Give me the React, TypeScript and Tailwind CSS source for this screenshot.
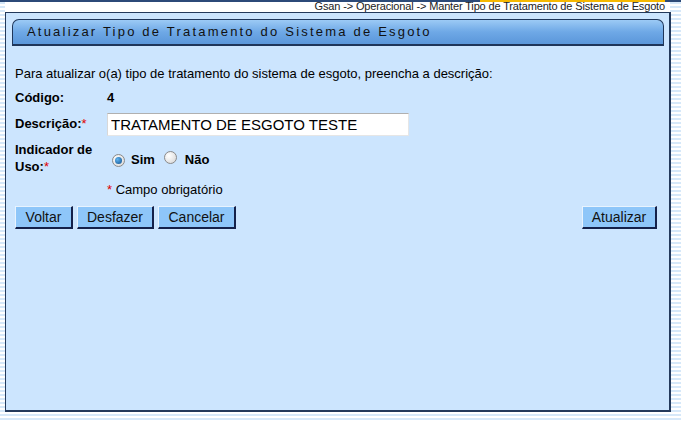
import React, { useState } from 'react';

const font = { fontFamily: '"Liberation Sans", Arial, sans-serif' };

const Radio: React.FC<{ checked: boolean; onClick: () => void }> = ({ checked, onClick }) => (
  <span
    onClick={onClick}
    className="inline-flex items-center justify-center w-[13px] h-[13px] rounded-full border border-[#8a8a8a] bg-[radial-gradient(circle_at_35%_35%,#ffffff,#d4d4d4)] cursor-pointer"
  >
    {checked && (
      <span className="block w-[7px] h-[7px] rounded-full bg-[radial-gradient(circle_at_35%_35%,#5fb4f0,#0f4e8c)]" />
    )}
  </span>
);

const Botao: React.FC<{ label: string; className?: string }> = ({ label, className = '' }) => (
  <button
    className={`h-[23px] px-[8px] bg-[#8ec6f9] text-[14px] text-[#111] leading-none border-t border-l border-t-[#e8f3fe] border-l-[#e8f3fe] border-b-2 border-r-2 border-b-[#14214a] border-r-[#14214a] ${className}`}
  >
    {label}
  </button>
);

export default function App() {
  const [ativo, setAtivo] = useState(true);
  const [descricao, setDescricao] = useState('TRATAMENTO DE ESGOTO TESTE');

  return (
    <div
      style={font}
      className="w-[681px] h-[422px] overflow-hidden bg-[repeating-linear-gradient(to_bottom,#ffffff_0px,#ffffff_2px,#d6e8f9_2px,#d6e8f9_4px)] text-[13px] text-black"
    >
      {/* linha do topo */}
      <div className="flex h-[2px]">
        <div className="w-[480px] bg-[#2c4a78]" />
        <div className="w-[185px] bg-[#f5b800]" />
        <div className="flex-1 bg-[#2c4a78]" />
      </div>

      {/* trilha */}
      <div className="ml-[5px] w-[665px] h-[10px] bg-white flex justify-end items-center">
        <span className="text-[11px] leading-none text-[#222] tracking-[-0.15px] pr-[5px] -mt-[1px]">
          Gsan -&gt; Operacional -&gt; Manter Tipo de Tratamento de Sistema de Esgoto
        </span>
      </div>

      {/* painel */}
      <div className="ml-[5px] w-[666px] h-[400px] bg-[#cce5fe] border border-[#23395b] border-b-2 border-r-2 pt-[6px] px-[6px]">
        <div className="h-[27px] mr-[-1px] rounded-t-[7px] border border-[#1f365a] border-b-2 bg-[linear-gradient(to_bottom,#9ccaf5,#6ea8e6_50%,#5b97da)] flex items-center pl-[14px]">
          <span className="text-[13px] tracking-[2.2px] text-[#111]">
            Atualizar Tipo de Tratamento do Sistema de Esgoto
          </span>
        </div>

        <div className="pl-[3px] pr-[7px]">
          <p className="mt-[20px] leading-[15px]">
            Para atualizar o(a) tipo de tratamento do sistema de esgoto, preencha a descrição:
          </p>

          <div className="flex items-center mt-[9px] h-[15px]">
            <span className="w-[92px] font-bold">Código:</span>
            <span className="font-bold">4</span>
          </div>

          <div className="flex items-center h-[24px] mt-[7px]">
            <span className="w-[92px] font-bold">
              Descrição:<span className="text-[#e00000] font-normal">*</span>
            </span>
            <input
              value={descricao}
              onChange={(e) => setDescricao(e.target.value)}
              className="w-[302px] h-[23px] bg-white border border-t-[#b0b0b0] border-l-[#d8d8d8] border-r-[#e6e6e6] border-b-[#e6e6e6] px-[3px] text-[15px] text-black outline-none"
            />
          </div>

          <div className="flex items-center mt-[5px]">
            <span className="w-[92px] font-bold leading-[17px]">
              Indicador de
              <br />
              Uso:<span className="text-[#e00000] font-normal">*</span>
            </span>
            <div className="flex items-center mt-[4px] ml-[5px]">
              <Radio checked={ativo} onClick={() => setAtivo(true)} />
              <span className="font-bold ml-[6px]">Sim</span>
              <span className="ml-[9px]">
                <Radio checked={!ativo} onClick={() => setAtivo(false)} />
              </span>
              <span className="font-bold ml-[8px]">Não</span>
            </div>
          </div>

          <div className="mt-[7px] ml-[92px] leading-[15px]">
            <span className="text-[#e00000]">*</span> Campo obrigatório
          </div>

          <div className="flex items-center mt-[9px]">
            <div className="flex gap-[4px]">
              <Botao label="Voltar" className="w-[58px]" />
              <Botao label="Desfazer" className="w-[77px]" />
              <Botao label="Cancelar" className="w-[78px]" />
            </div>
            <Botao label="Atualizar" className="w-[75px] ml-auto mr-[-1px]" />
          </div>
        </div>
      </div>
    </div>
  );
}
